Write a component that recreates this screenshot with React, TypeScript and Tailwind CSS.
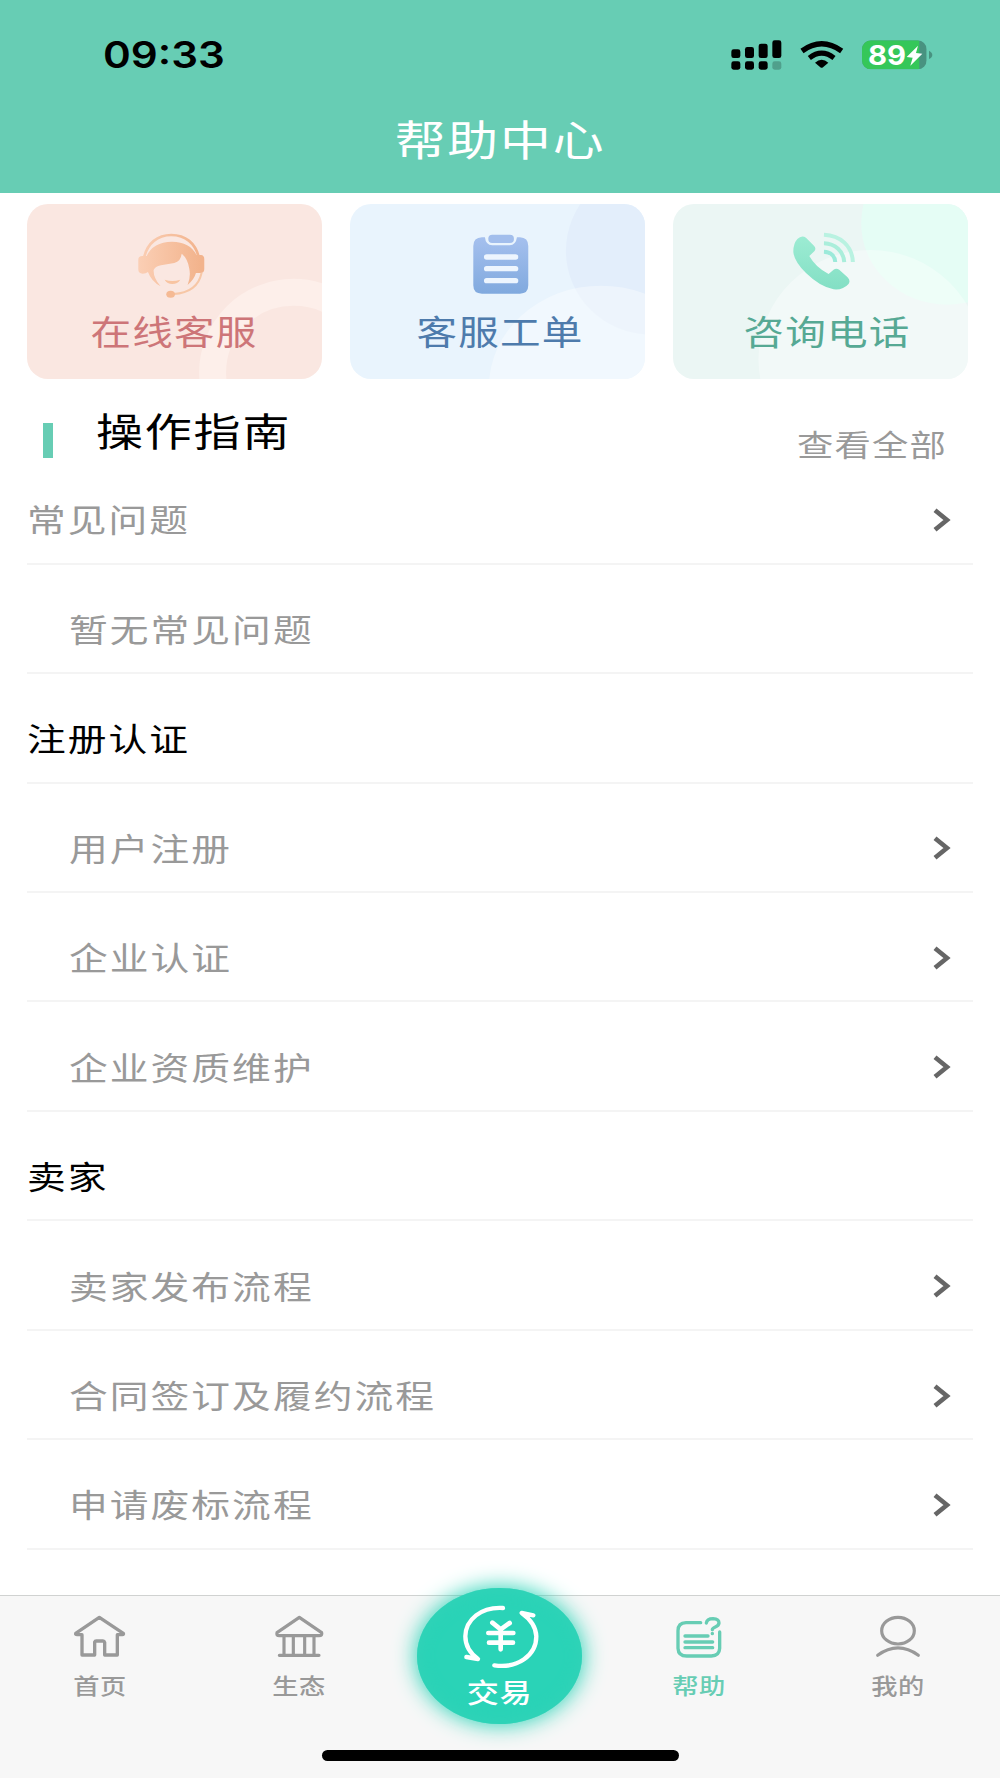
import type { ReactNode } from "react";

type Row = {
    title: string;
    kind: "top" | "group" | "item";
    arrow?: boolean;
};

const rows: Row[] = [
    { title: "常见问题", kind: "top", arrow: true },
    { title: "暂无常见问题", kind: "item" },
    { title: "注册认证", kind: "group" },
    { title: "用户注册", kind: "item", arrow: true },
    { title: "企业认证", kind: "item", arrow: true },
    { title: "企业资质维护", kind: "item", arrow: true },
    { title: "卖家", kind: "group" },
    { title: "卖家发布流程", kind: "item", arrow: true },
    { title: "合同签订及履约流程", kind: "item", arrow: true },
    { title: "申请废标流程", kind: "item", arrow: true },
];

function StatusIcons() {
    return (
        <svg viewBox="690 110 620 105" className="w-[206.67px] h-[35px]">
            <g fill="#000">
                <rect x="694" y="147" width="27" height="26" rx="7" />
                <rect x="735" y="140" width="27" height="33" rx="7" />
                <rect x="776" y="130" width="27" height="43" rx="7" />
                <rect x="817" y="120" width="27" height="53" rx="7" />
                <rect x="694" y="183" width="27" height="25" rx="7" />
                <rect x="735" y="183" width="27" height="25" rx="7" />
                <rect x="776" y="183" width="27" height="25" rx="7" />
                <rect x="817" y="183" width="27" height="25" rx="7" fillOpacity="0.22" />
            </g>
            <path d="M906 152 Q965 109 1025 152" fill="none" stroke="#000" strokeWidth="16" />
            <path d="M928 173 Q965 144 1002 173" fill="none" stroke="#000" strokeWidth="15" />
            <path d="M945 187 Q965 169 985 187 L969 201 Q965 204 961 201 Z" fill="#000" />
            <clipPath id="battery">
                <rect x="1086" y="120" width="194" height="87" rx="27" />
            </clipPath>
            <g clipPath="url(#battery)">
                <rect x="1086" y="120" width="194" height="87" fill="#489280" />
                <rect x="1086" y="120" width="172" height="87" fill="#35c759" />
            </g>
            <path d="M1287 151 Q1297 156 1297 164 Q1297 172 1287 176 Z" fill="#489280" />
            <text x="1104" y="193" fontSize="80" fontWeight="700" fill="#fff" textLength="114" lengthAdjust="spacingAndGlyphs" className="font-['Inter',sans-serif]">89</text>
            <path d="M1254 136 L1220 170 L1238 172 L1231 196 L1267 160 L1248 158 Z" fill="#fff" />
        </svg>
    );
}

function ServiceArt() {
    return (
        <svg viewBox="80 42 885 524" preserveAspectRatio="none" className="absolute inset-0 w-full h-full">
            <defs>
                <linearGradient id="peach" gradientUnits="userSpaceOnUse" x1="414" y1="0" x2="600" y2="0">
                    <stop offset="0" stopColor="#fbcfb5" />
                    <stop offset="1" stopColor="#f2b38c" />
                </linearGradient>
            </defs>
            <ellipse cx="880" cy="547" rx="243" ry="240" fill="none" stroke="#fdefea" strokeWidth="81" />
            <path d="M431 204 C441 159 472 135 513 135 C555 135 586 159 596 204" fill="none" stroke="url(#peach)" strokeWidth="8" />
            <path d="M414 209 Q414 198 426 198 H439 Q458 156 515 155 Q569 156 589 195 H602 Q612 196 612 207 V237 Q612 249 601 249 H587 Q582 268 562 285 Q572 260 567 236 Q562 205 544 191 Q542 214 522 219 L482 226 Q464 230 460 240 Q459 264 481 289 Q453 274 443 246 Q437 251 427 251 Q414 251 414 238 Z" fill="url(#peach)" />
            <path d="M493 269 Q516 277 540 269 Q532 282 516 282 Q501 282 493 269 Z" fill="#f8c4a1" />
            <path d="M604 248 C595 292 562 309 520 312" fill="none" stroke="#f7c7a6" strokeWidth="6" />
            <ellipse cx="511" cy="313" rx="13" ry="10.5" fill="#f5ba94" />
        </svg>
    );
}

function TicketArt() {
    return (
        <svg viewBox="59 42 885 524" preserveAspectRatio="none" className="absolute inset-0 w-full h-full">
            <defs>
                <linearGradient id="blue" x1="0" y1="0" x2="0" y2="1">
                    <stop offset="0" stopColor="#a5c0ee" />
                    <stop offset="1" stopColor="#80a9de" />
                </linearGradient>
            </defs>
            <ellipse cx="960" cy="182" rx="253" ry="251" fill="#e3eefb" />
            <ellipse cx="812" cy="590" rx="336" ry="303" fill="#fff" fillOpacity="0.36" />
            <path d="M455 142 H464 Q466 165 486 166 H538 Q557 165 560 142 H569 Q594 143 594 168 V286 Q594 311 569 311 H455 Q429 311 429 286 V168 Q429 143 455 142 Z" fill="url(#blue)" />
            <rect x="474" y="134" width="77" height="25" rx="12" fill="#a2beec" />
            <g fill="#edf5fe">
                <rect x="461" y="193" width="103" height="16" rx="8" />
                <rect x="461" y="228" width="103" height="16" rx="8" />
                <rect x="461" y="264" width="103" height="16" rx="8" />
            </g>
        </svg>
    );
}

function PhoneArt() {
    return (
        <svg viewBox="38 42 887 524" preserveAspectRatio="none" className="absolute inset-0 w-full h-full">
            <defs>
                <linearGradient id="mint" x1="0" y1="0" x2="0" y2="1">
                    <stop offset="0" stopColor="#9cecd3" />
                    <stop offset="1" stopColor="#83dfc4" />
                </linearGradient>
            </defs>
            <ellipse cx="862" cy="100" rx="258" ry="244" fill="#e5fdf5" />
            <ellipse cx="631" cy="508" rx="336" ry="328" fill="#fff" fillOpacity="0.36" />
            <path d="M412 147 Q425 134 438 143 L462 167 Q470 176 463 184 L448 198 Q467 232 506 252 L521 239 Q529 233 538 239 L563 262 Q573 272 566 282 Q549 301 521 298 Q480 290 438 249 Q403 215 400 187 Q399 162 412 147 Z" fill="url(#mint)" />
            <g fill="none" strokeWidth="12">
                <path d="M492 134 C542 136 577 168 579 216" stroke="#b9f2e1" />
                <path d="M492 160 C526 161 551 184 553 216" stroke="#aaeedb" />
                <path d="M492 185 C512 186 525 198 526 216" stroke="#9ceada" />
            </g>
        </svg>
    );
}

function Card({ label, className, art }: { label: string; className: string; art: ReactNode }) {
    return (
        <button className={`relative h-[174.7px] overflow-hidden rounded-[21px] flex justify-center ${className}`}>
            {art}
            <span className="relative mt-[99px] text-[34.5px] leading-[54px] tracking-[1px] scale-x-[1.175]">{label}</span>
        </button>
    );
}

function Tab({ label, active, children }: { label: string; active?: boolean; children: ReactNode }) {
    return (
        <div className={`w-[199.6px] pt-[17px] flex flex-col items-center ${active ? "text-[#67cdb4]" : "text-[#999]"}`}>
            {children}
            <span className="mt-[10px] text-[21.5px] leading-8 font-medium tracking-[0.5px] scale-x-[1.22]">{label}</span>
        </div>
    );
}

const tabIcon = "w-[60px] h-[46.67px] fill-none stroke-current";

function TabBar() {
    return (
        <nav className="h-[183px] border-t border-[#d0d2d1] bg-[#f7f7f7] flex flex-col">
            <div className="flex h-[154px] shrink-0">
                <Tab label="首页">
                    <svg viewBox="210 100 180 140" className={tabIcon} strokeWidth="10" strokeLinejoin="round">
                        <path d="M298 113 L227 161 Q226 165 231 165 H246 V226 H284 V187 Q285 184 289 184 H309 Q313 184 314 188 V226 H352 V165 H367 Q372 165 370 161 Z" />
                    </svg>
                </Tab>
                <Tab label="生态">
                    <svg viewBox="807 100 180 140" className={tabIcon} strokeWidth="9.5" strokeLinejoin="round" strokeLinecap="round">
                        <path d="M898 113 L831 159 Q828 168 838 168 H957 Q968 168 965 159 Z" />
                        <path d="M852 170 V226 M880 170 V226 M914 170 V226 M942 170 V226 M838 227 H957" />
                    </svg>
                </Tab>
                <div className="w-[199.6px] pl-[2px] flex justify-center">
                    <div className="-mt-2 w-[165px] h-[136px] shrink-0 rounded-[50%] bg-[#2ad3b7] shadow-[0_0_22px_1px_#2ad3b7] inset-shadow-[0_0_16px_#34d3b8] flex flex-col items-center text-white">
                        <svg viewBox="365 130 240 200" className="mt-[15px] ml-[3px] w-20 h-[66.67px] shrink-0" fill="none" stroke="#fff" strokeWidth="13" strokeLinecap="round" strokeLinejoin="round">
                            <path d="M491 145 C425 141 379 180 378 230 C378 257 391 280 416 298 L381 292" />
                            <path d="M465 317 C535 327 591 288 591 230 C590 201 575 180 547 160 L582 167" />
                            <path d="M459 189 L484 209 L511 190 M484 209 V269 M447 220 H522 M449 249 H521" strokeWidth="14" />
                        </svg>
                        <span className="mt-[5px] text-[27px] leading-9 font-medium tracking-[0.5px] scale-x-[1.19]">交易</span>
                    </div>
                </div>
                <Tab label="帮助" active>
                    <svg viewBox="26 100 180 140" className={tabIcon} strokeWidth="10" strokeLinecap="round">
                        <path d="M121 129 H77 Q53 130 53 153 V206 Q54 229 79 229 H153 Q177 228 178 206 V157" />
                        <path d="M74 169 H143 M74 187 H157 M74 204 H157" />
                        <path d="M138 130 Q140 117 158 117 Q176 118 176 130 Q175 138 165 142 Q156 146 156 150 M156 161 V162" />
                    </svg>
                </Tab>
                <Tab label="我的">
                    <svg viewBox="625 100 180 140" className={tabIcon} strokeWidth="9.5" strokeLinecap="round">
                        <ellipse cx="715" cy="153" rx="49" ry="40" />
                        <path d="M654 227 Q715 183 776 227" />
                    </svg>
                </Tab>
            </div>
            <div className="mx-auto w-[357px] h-[11px] rounded-full bg-black" />
        </nav>
    );
}

function App() {
    return (
        <div className="w-[1000px] h-[1778px] overflow-hidden bg-white flex flex-col font-['Noto_Sans_CJK_SC',sans-serif]">
            <header className="h-[192.5px] shrink-0 bg-[#67cdb4] flex flex-col">
                <div className="h-[109px] shrink-0 pl-[103px] pr-[63.3px] flex items-center justify-between">
                    <span className="mt-[1px] origin-left scale-x-[1.155] font-['Inter',sans-serif] text-[36.5px] font-semibold">09:33</span>
                    <StatusIcons />
                </div>
                <h1 className="-mt-[3px] text-center text-[42px] leading-[64px] text-white font-normal">
                    <span className="inline-block tracking-[1.5px] scale-x-[1.21]">帮助中心</span>
                </h1>
            </header>

            <section className="mt-[11.5px] pl-[26.7px] pr-8 grid grid-cols-3 gap-[28.3px] shrink-0">
                <Card label="在线客服" className="bg-[#fae7e1] text-[#cd7578]" art={<ServiceArt />} />
                <Card label="客服工单" className="pl-[5px] bg-[#e9f4fd] text-[#4e7bac]" art={<TicketArt />} />
                <Card label="咨询电话" className="pl-[12px] bg-[#ebf6f4] text-[#56a994]" art={<PhoneArt />} />
            </section>

            <div className="h-[76.5px] shrink-0 pl-[43px] pr-[53px] flex items-start">
                <i className="mt-11 w-[10px] h-[35px] bg-[#67cdb4]" />
                <h2 className="ml-[43px] mt-5 origin-left scale-x-[1.22] text-[38.5px] leading-[60px] tracking-[1.5px] font-normal text-black">操作指南</h2>
                <a className="ml-auto mt-[41px] origin-right scale-x-[1.21] text-[30px] leading-[46px] tracking-[1px] text-[#999]">查看全部</a>
            </div>

            <ul className="shrink-0 px-[27px] h-[1139.4px]">
                {rows.map((row) => (
                    <li
                        key={row.title}
                        className={`h-[109.46px] pt-[22px] pr-[22px] border-b-2 border-[#f4f4f4] flex items-center justify-between ${row.kind === "item" ? "pl-[42px]" : ""} ${row.kind === "group" ? "text-black" : "text-[#999]"}`}
                    >
                        <span className="-mt-[3px] origin-left scale-x-[1.21] text-[32px] leading-[50px] tracking-[1.7px]">{row.title}</span>
                        {row.arrow && (
                            <svg viewBox="0 0 18 24" className="w-[18px] h-6" fill="none" stroke="#666" strokeWidth="4.6">
                                <path d="M2 2.2 L14 12 L2 21.8" />
                            </svg>
                        )}
                    </li>
                ))}
            </ul>

            <TabBar />
        </div>
    );
}

export default App;
